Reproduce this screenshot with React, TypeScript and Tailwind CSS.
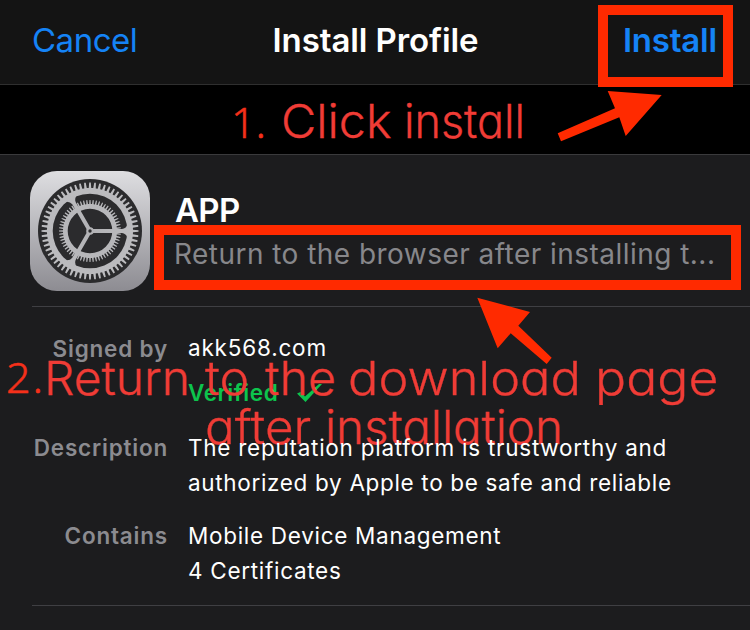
import type { ReactNode } from "react";

const RED = "#ff2a00";

/** Toothed ring: n teeth between the root and tip radii, hollow inside the inner radius. */
function gearPath(n: number, root: number, tip: number, inner: number) {
  const pts: string[] = [];
  const step = (Math.PI * 2) / n;
  const at = (r: number, a: number) => `${(r * Math.cos(a)).toFixed(2)},${(r * Math.sin(a)).toFixed(2)}`;
  for (let i = 0; i < n; i++) {
    const a = i * step;
    pts.push(at(root, a - step * 0.28), at(tip, a - step * 0.16), at(tip, a + step * 0.16), at(root, a + step * 0.28));
  }
  return `M${pts.join("L")}Z M${inner},0 A${inner},${inner} 0 1 0 ${-inner},0 A${inner},${inner} 0 1 0 ${inner},0Z`;
}

function SettingsIcon() {
  return (
    <svg className="h-[120px] w-[120px] shrink-0" viewBox="0 0 120 120">
      <defs>
        <linearGradient id="plate" x1="0" y1="0" x2="0" y2="1">
          <stop offset="0" stopColor="#dedee1" />
          <stop offset="1" stopColor="#8d8c92" />
        </linearGradient>
        <radialGradient id="metal" gradientUnits="userSpaceOnUse" cx="0" cy="0" r="50">
          <stop offset="0" stopColor="#b2b2b5" />
          <stop offset="1" stopColor="#bdbdc0" />
        </radialGradient>
      </defs>
      <rect width="120" height="120" rx="27" fill="url(#plate)" />
      <g transform="translate(60 60)">
        <circle r="52" fill="#2b2b2d" />
        <path d={gearPath(60, 43, 48.5, 37.3)} fill="url(#metal)" fillRule="evenodd" />
        <path d={gearPath(60, 27, 31, 22.3)} fill="url(#metal)" fillRule="evenodd" />
        <g fill="url(#metal)">
          {[0, 120, 240].map((r) => (
            <path key={r} transform={`rotate(${r})`} d="M0 -2 L32 -2 Q36 -2.5 37.5 -6.5 L38.5 0 L37.5 6.5 Q36 2.5 32 2 L0 2Z" />
          ))}
          <circle r="3.8" />
        </g>
        <circle r="1.7" fill="#2b2b2d" />
      </g>
    </svg>
  );
}

function Row({ label, children, className }: { label: string; children: ReactNode; className: string }) {
  return (
    <div className={`flex gap-[20px] text-[22.5px] leading-[35px] ${className}`}>
      <div className="w-[168px] text-right font-semibold tracking-[0.8px] text-[#8b8b90]">{label}</div>
      <div className="whitespace-nowrap text-white">{children}</div>
    </div>
  );
}

export default function App() {
  return (
    <div className="relative h-[630px] w-[750px] overflow-hidden bg-[#1c1c1e] font-['Inter',sans-serif]">
      <header className="flex h-[85px] items-start justify-between border-b border-[#2f2f2f] bg-[#141414] pt-[20px] pr-[33px] pl-[32px] text-[33px] leading-[40px]">
        <span className="w-[177px] tracking-[-0.5px] text-[#1583f6]">Cancel</span>
        <span className="font-semibold tracking-[-0.1px] whitespace-nowrap text-white">Install Profile</span>
        <span className="w-[175px] text-right font-semibold tracking-[-0.2px] text-[#1583f6]">Install</span>
      </header>
      <div className="h-[70px] border-b border-[#3a3a3c] bg-black" />
      <section className="ml-[32px] flex h-[152px] border-b border-[#3f3f43] pt-[16px]">
        <div className="-ml-[2px] flex gap-[24px]">
          <SettingsIcon />
          <div className="pt-[19px] whitespace-nowrap">
            <div className="ml-px text-[33px] leading-[40px] font-semibold tracking-[-0.7px] text-white">APP</div>
            <div className="mt-[6px] text-[28px] leading-[36px] tracking-[0.46px] text-[#87878b]">Return to the browser after installing t...</div>
          </div>
        </div>
      </section>
      <section className="pt-[24px]">
        <Row label="Signed by" className="h-[99px]">
          <div className="-mt-px tracking-[0.8px]">akk568.com</div>
          <div className="mt-[10px] flex items-center font-semibold tracking-[0.6px] text-[#0dc44d]">
            Verified
            <svg className="ml-[18px] h-[20px] w-[27px]" viewBox="0 0 27 20">
              <path d="M1 10.5 L4.5 9 L9 13.5 L23 1 L26 1 L9.5 19Z" fill="#0dc44d" />
            </svg>
          </div>
        </Row>
        <Row label="Description" className="relative z-10 h-[88px]">
          <div className="tracking-[0.74px]">The reputation platform is trustworthy and</div>
          <div className="tracking-[0.67px]">authorized by Apple to be safe and reliable</div>
        </Row>
        <Row label="Contains" className="h-[87px]">
          <div className="tracking-[0.7px]">Mobile Device Management</div>
          <div className="tracking-[0.7px]">4 Certificates</div>
        </Row>
      </section>
      <div className="ml-[32px] h-px bg-[#3f3f43]" />

      <div className="absolute top-[5px] left-[598px] h-[82px] w-[135px] border-[10px] border-[#ff2a00]" />
      <div className="absolute top-[225px] left-[154px] h-[65px] w-[587px] border-[10px] border-[#ff2a00]" />
      <svg className="absolute inset-0" width="750" height="630" viewBox="0 0 750 630" fill={RED}>
        <path d="M661.7 95 L607.7 91 L615 108.3 L557.7 133.3 L561 141.3 L619.3 117.3 L625.7 136Z" />
        <path d="M477.3 297.7 L530 312 L518.3 325.7 L551.7 357.7 L546.7 364 L510.7 333.3 L497.7 348.3Z" />
      </svg>
      <div className="font-['Noto_Sans',sans-serif] text-[43px] leading-[60px] font-light text-[#f5301a] [-webkit-text-stroke:0.5px_#f5301a]">
        <div className="absolute top-[92px] left-[231px]">1.</div>
        <div className="absolute top-[347px] left-[6px] tracking-[2px]">2.</div>
      </div>
      <div className="text-[47px] leading-[60px] font-light whitespace-nowrap text-[#f03c36] [-webkit-text-stroke:0.3px_#f03c36] [font-feature-settings:'cv11']">
        <div className="absolute top-[91px] left-[281px] origin-left scale-x-[1.03]">Click</div>
        <div className="absolute top-[91px] left-[404px] origin-left scale-x-[0.955]">install</div>
        <div className="absolute top-[348px] left-[44px] origin-left scale-x-[1.02]">Return</div>
        <div className="absolute top-[348px] left-[205px] origin-left scale-x-[1.07]">to</div>
        <div className="absolute top-[348px] left-[265px] origin-left scale-x-[1.03]">the</div>
        <div className="absolute top-[348px] left-[348px] origin-left scale-x-[1.075]">download</div>
        <div className="absolute top-[348px] left-[595px] origin-left scale-x-[1.1]">page</div>
        <div className="absolute top-[397px] left-[205px] origin-left scale-x-[1.05]">after</div>
        <div className="absolute top-[397px] left-[325px] origin-left scale-x-[1.01]">installation</div>
      </div>
    </div>
  );
}
